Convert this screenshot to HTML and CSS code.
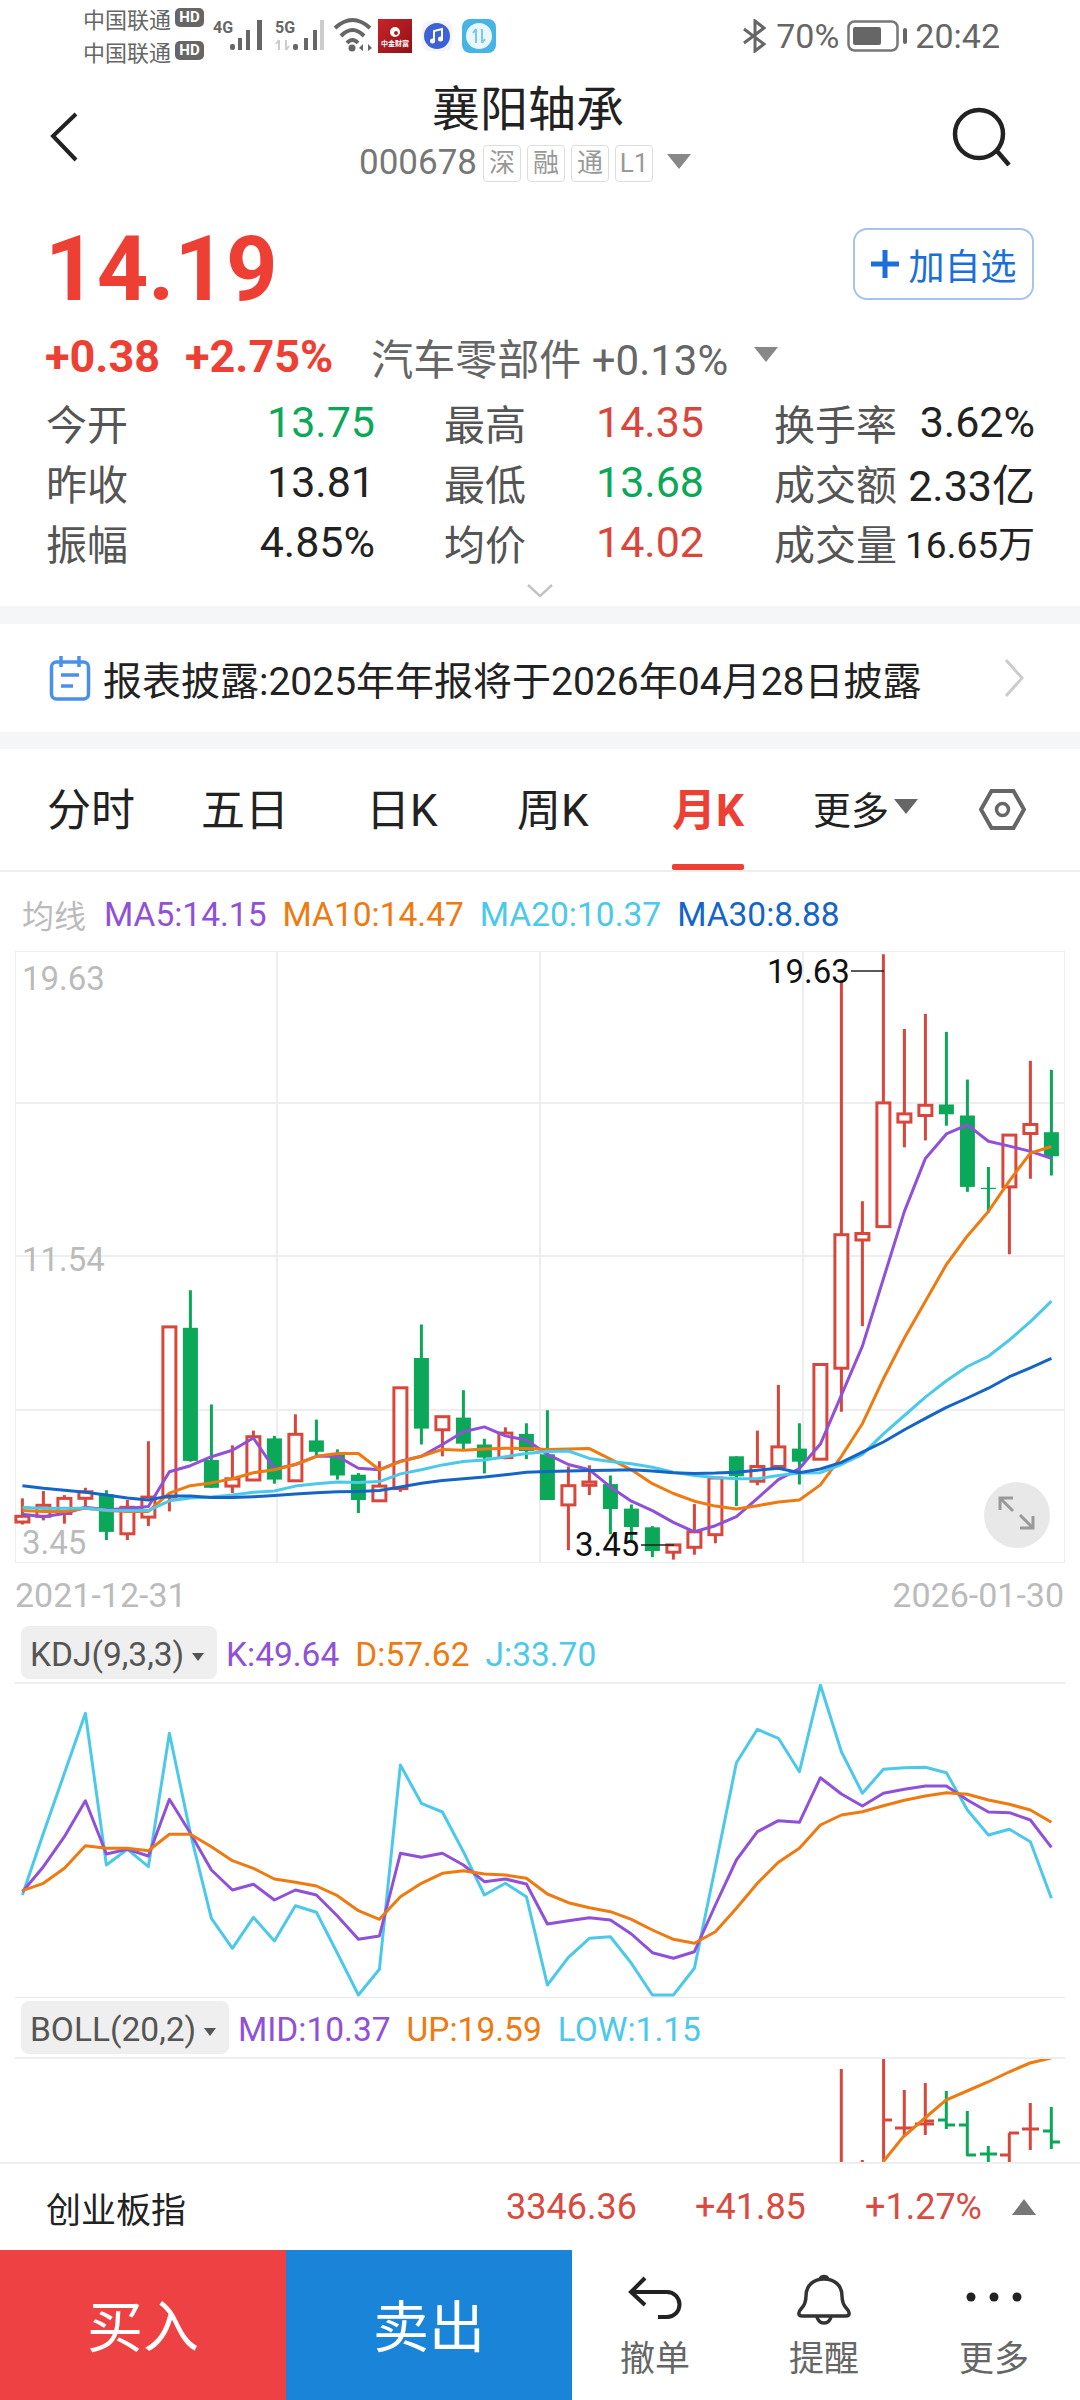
FILE: index.html
```html
<!DOCTYPE html>
<html lang="zh-CN">
<head>
  <meta charset="UTF-8">
  <meta name="viewport" content="width=device-width, initial-scale=1.0">
  <title>襄阳轴承</title>
  <link rel="stylesheet" href="styles.css">
</head>
<body>

  <!-- status bar -->
  <div class="status-bar">
    <div class="carriers">
      <div class="carrier">中国联通<span class="hd">HD</span></div>
      <div class="carrier">中国联通<span class="hd">HD</span></div>
    </div>
    <svg class="signal" width="160" height="40" viewBox="0 0 160 40">
      <text class="net-text" x="0" y="18">4G</text>
      <rect class="bar" x="17" y="29" width="5" height="6" rx="2"/>
      <rect class="bar" x="25" y="23" width="4" height="12"/>
      <rect class="bar" x="33" y="15" width="4" height="20"/>
      <rect class="bar" x="44" y="5" width="5" height="30"/>
      <text class="net-text" x="62" y="18">5G</text>
      <path d="M66 25v10M66 25l-3 4M73 25v10M73 35l3-4" stroke="#ccc" stroke-width="2" fill="none"/>
      <rect class="bar" x="80" y="29" width="5" height="6" rx="2"/>
      <rect class="bar" x="91" y="23" width="4" height="12"/>
      <rect class="bar" x="100" y="15" width="4" height="20"/>
      <rect x="107" y="5" width="4" height="30" fill="#ccc"/>
      <path d="M122 13Q139.500 -3 157 13M128 21Q139.500 9 151 21M134 28Q139.500 22 145 28" stroke="#666" stroke-width="4" fill="none"/>
      <circle cx="139" cy="33" r="3.500" fill="#666"/>
      <path d="M150 29v7l-4-3zM155 29v7l4-3z" fill="#666"/>
    </svg>
    <svg class="app-icon app-red" width="34" height="34" viewBox="0 0 34 34">
      <defs>
        <linearGradient id="redGrad" x1="0" y1="0" x2="1" y2="1">
          <stop offset="0" stop-color="#c8242a"/>
          <stop offset="1" stop-color="#8e1216"/>
        </linearGradient>
      </defs>
      <rect width="34" height="34" fill="url(#redGrad)"/>
      <circle cx="17" cy="13" r="5" fill="#fff"/>
      <circle cx="18" cy="14" r="2" fill="#b01c20"/>
      <text class="app-text" x="17" y="27" text-anchor="middle">中金财富</text>
    </svg>
    <svg class="app-icon app-music" width="30" height="30" viewBox="0 0 30 30">
      <rect width="30" height="30" rx="7" fill="#f6f4fb"/>
      <circle cx="15" cy="15" r="13" fill="#3d62d6"/>
      <path d="M12 20V10l8-2v10" stroke="#fff" stroke-width="2" fill="none"/>
      <circle cx="10.500" cy="20" r="2.500" fill="#fff"/>
      <circle cx="18.500" cy="18" r="2.500" fill="#fff"/>
    </svg>
    <svg class="app-icon" width="34" height="34" viewBox="0 0 34 34">
      <rect width="34" height="34" rx="8" fill="#47b4e6"/>
      <circle cx="17" cy="17" r="13" fill="#eaf7fd"/>
      <path d="M14 10v14M14 10l-3 4M20 10v14M20 24l3-4" stroke="#7cc8ec" stroke-width="2" fill="none"/>
    </svg>

    <div class="status-right">
      <svg width="26" height="34" viewBox="0 0 26 34">
        <path d="M2 10l20 15-9 7V2l9 7L2 24" stroke="#666" stroke-width="3" fill="none"/>
      </svg>
      <span>70%</span>
      <svg width="60" height="32" viewBox="0 0 60 32">
        <rect x="1.500" y="1.500" width="49" height="29" rx="6" fill="none" stroke="#777" stroke-width="2.500"/>
        <rect x="6" y="7" width="28" height="18" rx="2" fill="#666"/>
        <rect x="56" y="8" width="4" height="16" rx="2" fill="#666"/>
      </svg>
      <span>20:42</span>
    </div>
  </div>

  <!-- title -->
  <div class="nav-bar">
    <svg class="nav-back" width="30" height="50" viewBox="0 0 30 50">
      <path d="M26 2L3 24l23 24" stroke="#222" stroke-width="4" fill="none"/>
    </svg>
    <div class="nav-title">
      <div class="stock-name">襄阳轴承</div>
      <div class="stock-code">
        000678
        <span class="tag">深</span>
        <span class="tag">融</span>
        <span class="tag">通</span>
        <span class="tag">L1</span>
        <span class="tri-down"></span>
      </div>
    </div>
    <svg class="nav-search" width="64" height="64" viewBox="0 0 64 64">
      <circle cx="29" cy="29" r="24" stroke="#222" stroke-width="4.500" fill="none"/>
      <path d="M47 46l12 14" stroke="#222" stroke-width="4.500" fill="none"/>
    </svg>
  </div>

  <!-- quote -->
  <div class="price-row">
    <div class="price">14.19</div>
    <div class="watch-btn">
      <svg width="30" height="30" viewBox="0 0 30 30">
        <path d="M15 1v28M1 15h28" stroke="#1a6fd8" stroke-width="5"/>
      </svg>
      加自选
    </div>
  </div>
  <div class="change-row">
    <span class="change">+0.38</span>
    <span class="change">+2.75%</span>
    <span class="sector">汽车零部件 +0.13%</span>
    <span class="tri-down"></span>
  </div>

  <div class="stats">
    <div class="stat-label">今开</div><div class="stat-value green">13.75</div>
    <div class="stat-label mid">最高</div><div class="stat-value red">14.35</div>
    <div class="stat-label last">换手率</div><div class="stat-value">3.62%</div>

    <div class="stat-label">昨收</div><div class="stat-value">13.81</div>
    <div class="stat-label mid">最低</div><div class="stat-value green">13.68</div>
    <div class="stat-label last">成交额</div><div class="stat-value">2.33亿</div>

    <div class="stat-label">振幅</div><div class="stat-value">4.85%</div>
    <div class="stat-label mid">均价</div><div class="stat-value red">14.02</div>
    <div class="stat-label last">成交量</div><div class="stat-value small">16.65万</div>
  </div>

  <div class="expand">
    <svg width="26" height="13" viewBox="0 0 26 13">
      <path d="M1 1l12 11L25 1" stroke="#c4c4c4" stroke-width="2.500" fill="none"/>
    </svg>
  </div>

  <div class="band band-top"></div>

  <div class="notice">
    <svg width="42" height="46" viewBox="0 0 42 46">
      <rect x="2.500" y="7" width="37" height="37" rx="5" fill="none" stroke="#4a90e8" stroke-width="3.500"/>
      <path d="M12 1v11M30 1v11" stroke="#4a90e8" stroke-width="3.500"/>
      <path d="M12 20h18M12 31h12" stroke="#4a90e8" stroke-width="3.500"/>
    </svg>
    <div class="notice-text">报表披露:2025年年报将于2026年04月28日披露</div>
    <svg class="notice-arrow" width="20" height="38" viewBox="0 0 20 38">
      <path d="M2 1l16 18L2 37" stroke="#ccc" stroke-width="3" fill="none"/>
    </svg>
  </div>

  <div class="band band-bottom"></div>

  <!-- period tabs -->
  <div class="tabs">
    <div class="tab">分时</div>
    <div class="tab">五日</div>
    <div class="tab">日K</div>
    <div class="tab">周K</div>
    <div class="tab active">月K</div>
    <div class="tab more">更多<span class="tri-down dark"></span></div>
    <svg class="tab-set" width="47" height="41" viewBox="0 0 47 41">
      <path d="M2 20.500L12.500 2h22L45 20.500 34.500 39h-22z" stroke="#666" stroke-width="4" fill="none"/>
      <circle cx="23.500" cy="20.500" r="6" stroke="#666" stroke-width="3.500" fill="none"/>
    </svg>
  </div>

  <div class="legend">
    <span class="legend-title">均线</span>
    <span class="c-purple">MA5:14.15</span>
    <span class="c-orange">MA10:14.47</span>
    <span class="c-cyan">MA20:10.37</span>
    <span class="c-blue">MA30:8.88</span>
  </div>

  <!-- k line chart -->
  <div class="main-chart">
    <svg id="mainPlot" width="1080" height="612"></svg>
    <span class="axis-label axis-top">19.63</span>
    <span class="axis-label axis-mid">11.54</span>
    <span class="axis-label axis-low">3.45</span>
    <span class="peak-label peak-high">19.63</span>
    <span class="peak-label peak-low">3.45</span>
    <div class="zoom-btn">
      <svg width="40" height="40" viewBox="0 0 40 40">
        <path d="M3 15V3h13M3 3l13 13M36 21v12H23M36 33L23 20" stroke="#999" stroke-width="3" fill="none"/>
      </svg>
    </div>
  </div>

  <div class="dates">
    <span>2021-12-31</span>
    <span>2026-01-30</span>
  </div>

  <!-- indicators -->
  <div class="ind-head ind-kdj">
    <div class="ind-select">KDJ(9,3,3)<span class="tri-small"></span></div>
    <span class="c-purple">K:49.64</span>
    <span class="c-orange">D:57.62</span>
    <span class="c-cyan">J:33.70</span>
  </div>
  <svg id="kdjPlot" class="plot" width="1080" height="313"></svg>

  <div class="ind-head ind-boll">
    <div class="ind-select">BOLL(20,2)<span class="tri-small"></span></div>
    <span class="c-purple">MID:10.37</span>
    <span class="c-orange">UP:19.59</span>
    <span class="c-cyan">LOW:1.15</span>
  </div>
  <svg id="bollPlot" class="plot" width="1080" height="103"></svg>

  <!-- index ticker -->
  <div class="index-row">
    <span class="index-name">创业板指</span>
    <span class="index-val">3346.36</span>
    <span class="index-val">+41.85</span>
    <span class="index-val">+1.27%</span>
    <span class="tri-up"></span>
  </div>

  <!-- bottom actions -->
  <div class="actions">
    <div class="trade buy">买入</div>
    <div class="trade sell">卖出</div>
    <div class="tools">
      <div class="tool">
        <svg width="64" height="64" viewBox="0 0 64 64">
          <path d="M22 8L8 22l14 13M8 22h36a12.500 12.500 0 0 1 0 25h-9" stroke="#222" stroke-width="4" fill="none"/>
        </svg>
        撤单
      </div>
      <div class="tool">
        <svg width="64" height="64" viewBox="0 0 64 64">
          <path d="M10 46h44c4 0 4-4 1-7-4-4-5-8-5-13C50 15 42 9 32 9S14 15 14 26c0 5-1 9-5 13-3 3-3 7 1 7z" stroke="#333" stroke-width="3.500" fill="none"/>
          <path d="M28 9a4.500 4.500 0 0 1 8 0M25 46a7 7 0 0 0 14 0" stroke="#333" stroke-width="3.500" fill="none"/>
        </svg>
        提醒
      </div>
      <div class="tool">
        <svg width="64" height="64" viewBox="0 0 64 64">
          <circle cx="9" cy="27" r="4.500" fill="#222"/>
          <circle cx="32" cy="27" r="4.500" fill="#222"/>
          <circle cx="55" cy="27" r="4.500" fill="#222"/>
        </svg>
        更多
      </div>
    </div>
  </div>

  <script src="chart.js"></script>
</body>
</html>
```

FILE: styles.css
```css
body {
  font-family: Roboto, "Noto Sans CJK SC", sans-serif;
  margin: 0;
  padding: 0;
  width: 1080px;
  height: 2400px;
  overflow: hidden;
  background-color: white;
  color: #222;
}

svg {
  display: block;
  flex: none;
}

.c-purple { color: #9050d8; }
.c-orange { color: #ee7a10; }
.c-cyan { color: #4cc9ea; }
.c-blue { color: #1565c8; }

.tri-down {
  display: inline-block;
  width: 0;
  height: 0;
  border-left: 12px solid transparent;
  border-right: 12px solid transparent;
  border-top: 15px solid #888;
}

.tri-down.dark {
  border-top-color: #666;
}

.tri-up {
  display: inline-block;
  width: 0;
  height: 0;
  border-left: 12px solid transparent;
  border-right: 12px solid transparent;
  border-bottom: 16px solid #777;
}

.tri-small {
  display: inline-block;
  width: 0;
  height: 0;
  margin-left: 8px;
  vertical-align: middle;
  border-left: 6px solid transparent;
  border-right: 6px solid transparent;
  border-top: 8px solid #555;
}

/* status bar */
.status-bar {
  height: 68px;
  display: flex;
  align-items: flex-start;
  padding-left: 83px;
  color: #666;
  box-sizing: border-box;
}

.carriers {
  width: 130px;
  padding-top: 1px;
}

.carrier {
  display: flex;
  align-items: center;
  height: 33px;
  font-size: 22px;
}

.hd {
  margin-left: 4px;
  width: 29px;
  height: 19px;
  line-height: 19px;
  border-radius: 5px;
  background-color: #666;
  color: white;
  font-size: 15px;
  font-weight: bold;
  text-align: center;
}

.signal {
  margin-top: 15px;
}

.net-text {
  font-size: 16px;
  font-weight: bold;
  fill: #666;
}

.bar {
  fill: #666;
}

.app-icon {
  margin-top: 19px;
  margin-left: 10px;
}

.app-red {
  margin-left: 5px;
}

.app-music {
  margin-top: 21px;
}

.app-text {
  font-size: 7px;
  font-weight: bold;
  fill: white;
}

.status-right {
  margin-left: auto;
  margin-right: 80px;
  height: 72px;
  display: flex;
  align-items: center;
  gap: 8px;
  font-size: 34px;
}

/* title */
.nav-bar {
  height: 128px;
  display: flex;
  align-items: center;
  justify-content: space-between;
  padding: 0 66px 0 50px;
  box-sizing: border-box;
}

.nav-back {
  margin-top: 10px;
}

.nav-search {
  margin-top: 10px;
}

.nav-title {
  display: flex;
  flex-direction: column;
  align-items: center;
  margin-left: 26px;
}

.stock-name {
  font-size: 48px;
  line-height: 62px;
}

.stock-code {
  display: flex;
  align-items: center;
  gap: 6px;
  margin-left: -6px;
  font-size: 35px;
  line-height: 44px;
  color: #777;
}

.tag {
  width: 38px;
  height: 37px;
  line-height: 35px;
  box-sizing: border-box;
  border: 1px solid #ddd;
  border-radius: 4px;
  font-size: 26px;
  color: #999;
  text-align: center;
}

.stock-code .tri-down {
  margin-left: 8px;
  margin-top: -4px;
}

/* quote */
.price-row {
  margin-top: 32px;
  height: 72px;
  display: flex;
  align-items: center;
  justify-content: space-between;
  padding: 0 46px 0 45px;
}

.price {
  margin-top: 12px;
  font-size: 90px;
  line-height: 72px;
  font-weight: bold;
  color: #ee3f34;
}

.watch-btn {
  width: 181px;
  height: 72px;
  box-sizing: border-box;
  display: flex;
  align-items: center;
  justify-content: center;
  gap: 8px;
  border: 2px solid #a8c4ee;
  border-radius: 14px;
  color: #1a6fd8;
  font-size: 36px;
}

.change-row {
  margin-top: 34px;
  height: 44px;
  display: flex;
  align-items: center;
  padding-left: 45px;
}

.change {
  font-size: 45px;
  font-weight: bold;
  color: #ee3f34;
  margin-right: 25px;
}

.sector {
  font-size: 42px;
  color: #666;
  margin-left: 13px;
}

.change-row .tri-down {
  margin-left: 26px;
  margin-top: -4px;
}

.stats {
  margin-top: 14px;
  padding-left: 46px;
  display: grid;
  grid-template-columns: 100px 229px 169px 160px 200px 131px;
  grid-auto-rows: 60px;
  align-items: center;
}

.stat-label {
  font-size: 41px;
  color: #555;
}

.stat-label.mid {
  padding-left: 69px;
}

.stat-label.last {
  padding-left: 70px;
}

.stat-value {
  font-size: 43px;
  text-align: right;
  white-space: nowrap;
}

.stat-value.small {
  font-size: 37px;
}

.green { color: #0aa858; }
.red { color: #d9463b; }

.expand {
  height: 34px;
  display: flex;
  justify-content: center;
  padding-top: 12px;
  box-sizing: border-box;
}

.band {
  background-color: #f5f6f8;
}

.band-top { height: 18px; }
.band-bottom { height: 17px; }

.notice {
  height: 108px;
  display: flex;
  align-items: center;
  padding: 0 56px 0 49px;
  box-sizing: border-box;
}

.notice-text {
  margin-left: 12px;
  font-size: 39px;
  white-space: nowrap;
}

.notice-arrow {
  margin-left: auto;
}

/* tabs */
.tabs {
  height: 123px;
  box-sizing: border-box;
  padding-left: 47px;
  border-bottom: 2px solid #eee;
  display: grid;
  grid-template-columns: 154px 165px 151px 155px 141px 166px auto;
  align-items: center;
}

.tab {
  position: relative;
  align-self: stretch;
  justify-self: start;
  display: flex;
  align-items: center;
  padding-bottom: 5px;
  box-sizing: border-box;
  font-size: 44px;
}

.tab.active {
  color: #ee3f34;
  font-weight: bold;
}

.tab.active::after {
  content: "";
  position: absolute;
  left: 0;
  right: 0;
  bottom: 0;
  height: 6px;
  border-radius: 2px;
  background-color: #ee3f34;
}

.tab.more {
  font-size: 38px;
}

.tab.more .tri-down {
  margin-left: 5px;
  margin-top: -2px;
}

.legend {
  height: 79px;
  display: flex;
  align-items: center;
  gap: 16px;
  padding-left: 22px;
  padding-top: 5px;
  box-sizing: border-box;
  font-size: 33.500px;
}

.legend-title {
  margin-right: 2px;
  font-size: 32px;
  color: #bbb;
}

/* chart */
.main-chart {
  position: relative;
  height: 612px;
}

.axis-label,
.peak-label {
  position: absolute;
  font-size: 33px;
  line-height: 34px;
  color: #bbb;
  white-space: nowrap;
}

.axis-top { left: 22px; top: 11px; }
.axis-mid { left: 22px; top: 292px; }
.axis-low { left: 22px; top: 575px; }

.peak-label {
  color: #111;
}

.peak-high { left: 767px; top: 4px; }
.peak-low { left: 575px; top: 577px; }

.zoom-btn {
  position: absolute;
  left: 984px;
  top: 531px;
  width: 66px;
  height: 66px;
  border-radius: 50%;
  background-color: #e8e8e8;
  display: flex;
  align-items: center;
  justify-content: center;
}

.dates {
  height: 63px;
  display: flex;
  align-items: center;
  justify-content: space-between;
  padding: 0 16px 0 15px;
  font-size: 34px;
  color: #bbb;
}

.ind-head {
  margin: 0 15px;
  padding-left: 6px;
  display: flex;
  align-items: flex-start;
  gap: 16px;
  font-size: 33.500px;
  line-height: 58px;
  box-sizing: border-box;
  border-bottom: 2px solid #eee;
}

.ind-head span {
  white-space: nowrap;
}

.ind-kdj {
  height: 58px;
}

.ind-boll {
  height: 62px;
  padding-top: 3px;
  border-top: 1px solid #e8e8e8;
}

.ind-select {
  padding-left: 9px;
  margin-right: -7px;
  height: 53px;
  box-sizing: border-box;
  border-radius: 8px;
  background-color: #efefef;
  color: #555;
  white-space: nowrap;
}

.ind-kdj .ind-select { width: 196px; }
.ind-boll .ind-select { width: 208px; }

.plot {
  overflow: hidden;
}

/* index ticker */
.index-row {
  height: 88px;
  box-sizing: border-box;
  border-top: 2px solid #eee;
  padding-left: 46px;
  display: grid;
  grid-template-columns: 460px 189px 170px 147px auto;
  align-items: center;
  font-size: 36px;
}

.index-name {
  font-size: 35px;
}

.index-val {
  color: #d94a40;
}

/* bottom actions */
.actions {
  height: 150px;
  display: flex;
}

.trade {
  width: 286px;
  display: flex;
  align-items: center;
  justify-content: center;
  padding-bottom: 6px;
  box-sizing: border-box;
  font-size: 56px;
  color: white;
}

.buy { background-color: #ee4144; }
.sell { background-color: #1a84d8; }

.tools {
  flex: 1;
  display: grid;
  grid-template-columns: 166px 172px 168px;
}

.tool {
  display: flex;
  flex-direction: column;
  align-items: center;
  padding-top: 20px;
  font-size: 35px;
  line-height: 52px;
  color: #666;
}
```

FILE: chart.js
```js
// x position of candle number i, same for all three plots
const cx = (i) => 22.4 + 21 * i;

const RED = '#d9463b';
const GREEN = '#0aa858';
const PURPLE = '#9050d8';
const ORANGE = '#ee7a10';
const CYAN = '#4cc9ea';
const BLUE = '#1565c8';

// [high, top, bottom, low, up], in plot units
const candles = [
  [1368, 1412, 1426, 1432, 1], [1350, 1385, 1412, 1422, 1], [1360, 1368, 1405, 1430, 1],
  [1342, 1352, 1368, 1390, 1], [1348, 1358, 1450, 1470, 0], [1372, 1390, 1455, 1470, 1],
  [1228, 1365, 1414, 1436, 1], [948, 948, 1365, 1400, 1], [858, 950, 1276, 1278, 0],
  [1138, 1274, 1342, 1342, 0], [1238, 1320, 1338, 1355, 1], [1202, 1217, 1323, 1323, 1],
  [1215, 1221, 1322, 1332, 0], [1162, 1211, 1325, 1325, 1], [1175, 1226, 1254, 1265, 0],
  [1248, 1260, 1312, 1322, 0], [1306, 1310, 1372, 1404, 0], [1277, 1338, 1374, 1377, 1],
  [1097, 1097, 1344, 1352, 1], [942, 1024, 1197, 1236, 0], [1168, 1168, 1200, 1265, 1],
  [1103, 1170, 1234, 1248, 0], [1222, 1236, 1268, 1307, 0], [1194, 1208, 1268, 1272, 1],
  [1184, 1210, 1252, 1272, 0], [1152, 1260, 1372, 1372, 0], [1290, 1337, 1384, 1495, 1],
  [1287, 1328, 1336, 1360, 1], [1312, 1333, 1394, 1456, 0], [1383, 1393, 1438, 1470, 0],
  [1436, 1439, 1497, 1512, 0], [1482, 1482, 1500, 1518, 1], [1382, 1450, 1488, 1506, 1],
  [1318, 1318, 1457, 1478, 1], [1265, 1265, 1314, 1387, 0], [1202, 1290, 1326, 1336, 1],
  [1090, 1242, 1290, 1290, 1], [1184, 1246, 1278, 1334, 0], [1040, 1040, 1272, 1272, 1],
  [100, 722, 1049, 1156, 1], [640, 719, 735, 946, 1], [35, 399, 702, 702, 1],
  [218, 426, 446, 508, 1], [181, 405, 430, 491, 1], [225, 403, 427, 455, 0],
  [342, 430, 605, 617, 0], [556, 607, 610, 668, 0], [478, 478, 605, 770, 1],
  [296, 452, 474, 585, 1], [318, 471, 530, 577, 0]
];

const ma5 = [1407, 1413, 1405, 1390, 1396, 1393, 1388, 1303, 1288, 1266, 1250, 1220, 1296, 1285, 1265, 1265, 1294, 1298, 1277, 1265, 1236, 1205, 1193, 1215, 1225, 1260, 1285, 1298, 1340, 1375, 1398, 1427, 1450, 1435, 1413, 1368, 1322, 1295, 1235, 1115, 995, 830, 665, 535, 475, 453, 493, 505, 518, 535];
const ma10 = [1398, 1400, 1400, 1392, 1398, 1400, 1400, 1355, 1337, 1330, 1320, 1305, 1298, 1285, 1265, 1258, 1258, 1298, 1278, 1265, 1248, 1250, 1247, 1245, 1246, 1248, 1247, 1246, 1272, 1298, 1332, 1356, 1375, 1387, 1394, 1386, 1377, 1372, 1335, 1265, 1185, 1075, 975, 885, 795, 725, 665, 590, 522, 506];
const ma20 = [1390, 1393, 1392, 1392, 1397, 1398, 1398, 1374, 1367, 1365, 1360, 1353, 1350, 1338, 1332, 1328, 1329, 1327, 1308, 1298, 1286, 1278, 1274, 1266, 1258, 1253, 1252, 1270, 1278, 1283, 1292, 1304, 1312, 1317, 1320, 1320, 1312, 1306, 1305, 1285, 1260, 1210, 1165, 1120, 1080, 1045, 1020, 980, 935, 885];
const ma30 = [1337, 1343, 1348, 1353, 1360, 1367, 1372, 1362, 1362, 1366, 1366, 1364, 1361, 1357, 1354, 1352, 1351, 1349, 1340, 1331, 1324, 1320, 1316, 1310, 1304, 1302, 1301, 1300, 1299, 1298, 1301, 1305, 1307, 1306, 1304, 1299, 1294, 1305, 1296, 1280, 1255, 1230, 1200, 1172, 1145, 1122, 1098, 1070, 1048, 1025];

const kLine = [935, 860, 770, 662, 822, 808, 828, 658, 760, 870, 930, 913, 960, 930, 945, 1008, 1078, 1068, 820, 832, 820, 855, 905, 897, 912, 1032, 1022, 1013, 1020, 1062, 1118, 1135, 1115, 975, 840, 755, 722, 727, 593, 642, 678, 640, 628, 618, 618, 660, 696, 698, 720, 802];
const dLine = [932, 910, 865, 797, 805, 805, 812, 763, 763, 800, 842, 865, 897, 907, 918, 947, 992, 1018, 950, 910, 880, 872, 882, 885, 895, 942, 968, 983, 995, 1018, 1050, 1078, 1090, 1055, 985, 910, 847, 805, 735, 705, 695, 677, 661, 648, 638, 643, 660, 673, 690, 727];
const jLine = [945, 760, 580, 400, 855, 808, 860, 460, 760, 1015, 1105, 1012, 1083, 977, 997, 1120, 1245, 1168, 555, 670, 696, 815, 945, 910, 950, 1215, 1132, 1075, 1070, 1150, 1245, 1245, 1165, 860, 548, 448, 475, 575, 315, 515, 640, 568, 563, 562, 578, 690, 765, 748, 785, 955];

function line(x1, y1, x2, y2, color, width) {
  return `<line x1="${x1}" y1="${y1}" x2="${x2}" y2="${y2}" stroke="${color}" stroke-width="${width}"/>`;
}

function polyline(values, toY, color, width) {
  const points = values.map((v, i) => `${cx(i)},${toY(v).toFixed(1)}`).join(' ');
  return `<polyline points="${points}" fill="none" stroke="${color}" stroke-width="${width}" stroke-linejoin="round"/>`;
}

function drawMain() {
  const y = (v) => v / 2.45 - 11;
  let html = '<rect x="15.5" y="0.5" width="1049" height="611" fill="none" stroke="#eee"/>';

  [152, 305, 459].forEach((gy) => { html += line(15, gy, 1065, gy, '#eee', 2); });
  [277, 540, 803].forEach((gx) => { html += line(gx, 0, gx, 612, '#eee', 2); });

  candles.forEach((c, i) => {
    const color = c[4] ? RED : GREEN;
    html += line(cx(i), y(c[0]), cx(i), y(c[3]), color, 3);
    if (c[4]) {
      html += `<rect x="${cx(i) - 6.5}" y="${y(c[1]).toFixed(1)}" width="13" height="${(y(c[2]) - y(c[1])).toFixed(1)}" fill="white" stroke="${color}" stroke-width="3"/>`;
    } else {
      html += `<rect x="${cx(i) - 7.5}" y="${y(c[1]).toFixed(1)}" width="15" height="${(y(c[2]) - y(c[1])).toFixed(1)}" fill="${color}"/>`;
    }
  });

  html += polyline(ma5, y, PURPLE, 3);
  html += polyline(ma10, y, ORANGE, 3);
  html += polyline(ma20, y, CYAN, 3);
  html += polyline(ma30, y, BLUE, 3);

  // leader lines of the high and low labels
  html += line(851, 20, 884, 20, '#222', 1.5);
  html += line(641, 594, 674, 594, '#222', 1.5);

  document.getElementById('mainPlot').innerHTML = html;
}

function drawKdj() {
  const y = (v) => v / 3 - 104;
  document.getElementById('kdjPlot').innerHTML =
    polyline(jLine, y, CYAN, 3) + polyline(kLine, y, PURPLE, 3) + polyline(dLine, y, ORANGE, 3);
}

function drawBoll() {
  // this plot is cut off by the ticker below, only the top of the sticks shows
  const top = 2059;
  const sticks = [
    [841.3, 2069, 2165, RED], [862.3, 2160, 2165, RED], [883.6, 2058, 2165, RED],
    [904.3, 2090, 2136, RED], [925.3, 2083, 2135, RED], [946.3, 2091, 2129, GREEN],
    [967.3, 2111, 2156, GREEN], [988.3, 2146, 2165, GREEN], [1009.3, 2133, 2165, RED],
    [1030.3, 2103, 2150, RED], [1051.3, 2107, 2149, GREEN]
  ];
  const ticks = [
    [883.6, 892, 2120, RED], [895, 913, 2128, RED], [915, 934, 2124, RED], [925, 934, 2121, RED],
    [938, 946, 2120, GREEN], [946, 955, 2125, GREEN], [959, 967, 2125, GREEN], [967, 976, 2155, GREEN],
    [980, 997, 2154, GREEN], [1000, 1009, 2155, RED], [1009, 1019, 2133, RED], [1022, 1039, 2129, RED],
    [1043, 1051, 2131, GREEN], [1051, 1060, 2142, GREEN]
  ];
  const up = [[883, 2162], [903, 2137], [925, 2118], [946, 2100], [967, 2091], [988, 2082], [1009, 2072], [1030, 2063], [1051, 2058]];

  let html = '';
  sticks.forEach((s) => { html += line(s[0], s[1] - top, s[0], s[2] - top, s[3], 3); });
  ticks.forEach((t) => { html += line(t[0], t[2] - top, t[1], t[2] - top, t[3], 3); });
  html += `<polyline points="${up.map((p) => `${p[0]},${p[1] - top}`).join(' ')}" fill="none" stroke="${ORANGE}" stroke-width="3"/>`;

  document.getElementById('bollPlot').innerHTML = html;
}

drawMain();
drawKdj();
drawBoll();
```
